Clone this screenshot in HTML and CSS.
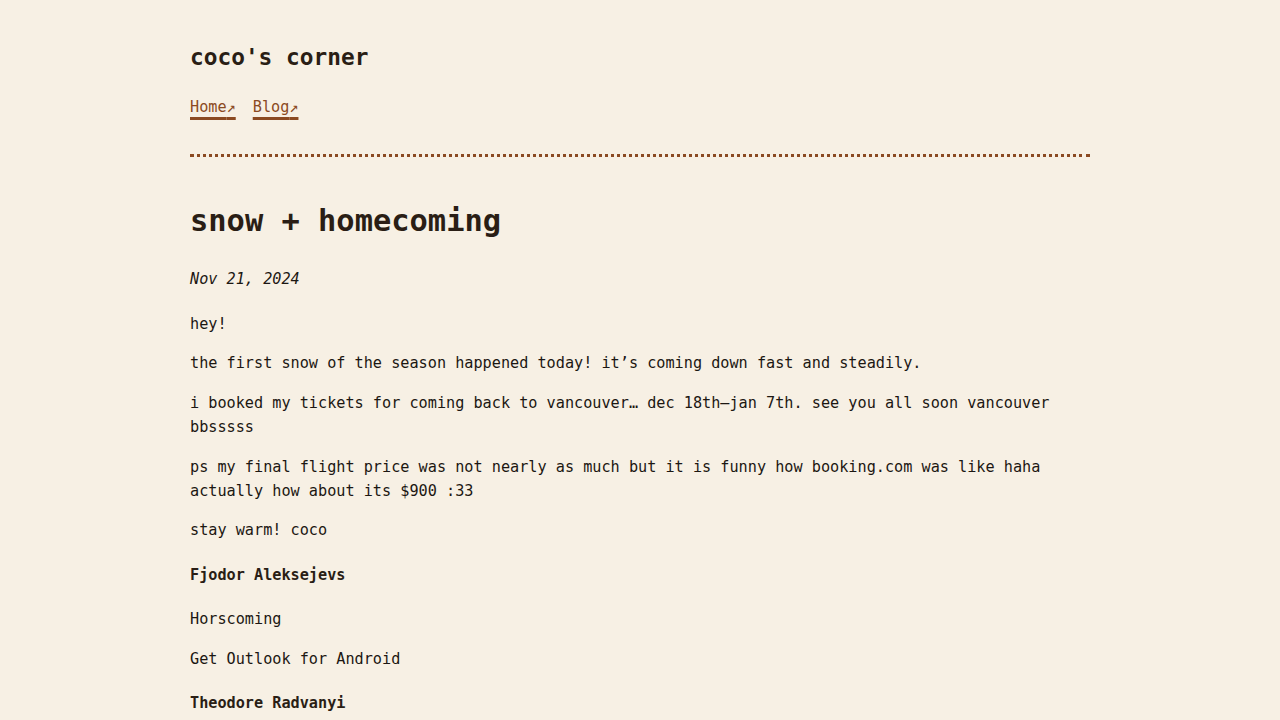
FILE: index.html
```html
<!DOCTYPE html>
<html lang="en">
<head>
<meta charset="utf-8">
<title>snow + homecoming — coco's corner</title>
<link rel="stylesheet" href="styles.css">
</head>
<body>
<div class="wrap">
  <header class="site-header">
    <div class="site-title">coco's corner</div>
    <nav class="site-nav">
      <a href="#">Home<span class="arrow">↗</span></a>
      <a href="#">Blog<span class="arrow">↗</span></a>
    </nav>
  </header>
  <article class="post">
    <h1 class="post-title">snow + homecoming</h1>
    <p class="post-date">Nov 21, 2024</p>
    <p>hey!</p>
    <p>the first snow of the season happened today! it’s coming down fast and steadily.</p>
    <p>i booked my tickets for coming back to vancouver… dec 18th–jan 7th. see you all soon vancouver bbsssss</p>
    <p>ps my final flight price was not nearly as much but it is funny how booking.com was like haha actually how about its $900 :33</p>
    <p>stay warm! coco</p>
    <h4>Fjodor Aleksejevs</h4>
    <p>Horscoming</p>
    <p>Get Outlook for Android</p>
    <h4>Theodore Radvanyi</h4>
  </article>
</div>
</body>
</html>
```
FILE: styles.css
```css
html, body {
  margin: 0;
  padding: 0;
}
body {
  background: #f7f0e4;
  color: #1c1712;
  font-family: "DejaVu Sans Mono", "Liberation Mono", monospace;
  font-size: 15.2px;
  line-height: 1.6;
}
.wrap {
  width: 900px;
  margin: 0 auto;
  padding-top: 39px;
}
.site-header {
  border-bottom: 3px dotted #8b4a22;
  padding-bottom: 34px;
}
.site-title {
  font-size: 22.8px;
  font-weight: bold;
  color: #2a1e15;
}
.site-nav {
  margin-top: 20px;
  display: flex;
  gap: 17px;
}
.site-nav a {
  color: #8b4a22;
  text-decoration: underline;
  text-decoration-thickness: 3px;
  text-underline-offset: 5px;
  text-decoration-color: #8b4a22;
}
.site-nav .arrow {
  font-size: 1em;
}
.post-title {
  font-size: 30.4px;
  line-height: 1.6;
  color: #2a1e15;
  margin: 40px 0 22px;
}
.post p {
  margin-top: 0;
  margin-bottom: 15.2px;
}
.post .post-date {
  font-style: italic;
  margin-bottom: 20px;
}
.post h4 {
  font-size: 15.2px;
  color: #2a1e15;
  margin: 20.2px 0;
}
```
